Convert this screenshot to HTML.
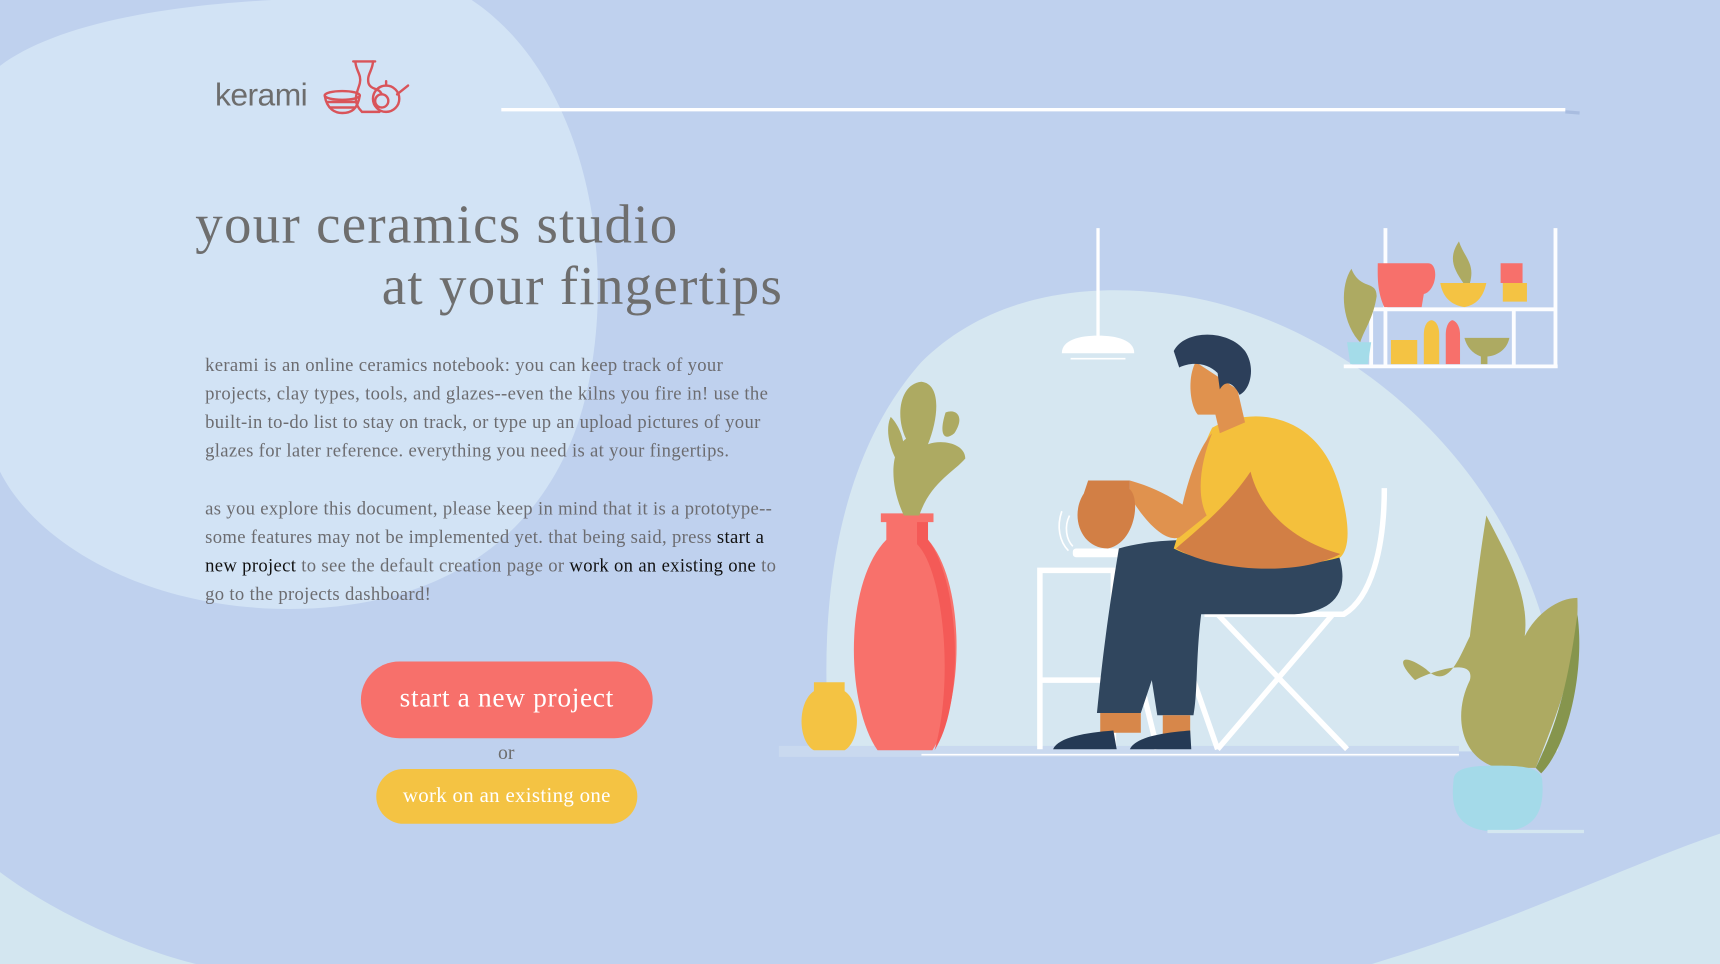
<!DOCTYPE html>
<html><head><meta charset="utf-8"><style>
html,body{margin:0;padding:0;width:1720px;height:964px;overflow:hidden;background:#bfd1ee}
#s{position:absolute;left:0;top:0;width:1568px;height:879px;transform:scale(1.09694);transform-origin:0 0}
svg{position:absolute;left:0;top:0}
.t{position:absolute;font-family:"Liberation Serif",serif;color:#6e6e6e;white-space:nowrap}
.p{font-size:17px;line-height:26px;color:#6c6c70;left:187px;letter-spacing:0.3px}
.p b{font-weight:normal;color:#111}
.btn{position:absolute;border-radius:40px;color:#fff;font-family:"Liberation Serif",serif;text-align:center}
</style></head><body><div id="s">
<svg width="1568" height="879" viewBox="0 0 1568 879">
<rect width="1568" height="879" fill="#bfd1ee"/>
<path d="M0 60 C60 15 200 -10 430 0 C520 60 560 200 540 330 C520 470 420 560 250 555 C120 550 30 490 0 430 Z" fill="#d2e3f5"/>
<path d="M0 795 C60 840 140 870 180 879 L0 879 Z" fill="#d3e6f0"/>
<path d="M1250 879 C1380 840 1480 790 1568 760 L1568 879 Z" fill="#d3e6f0"/>
<path d="M757 685 C745 560 760 420 840 330 C900 270 990 255 1080 270 C1200 290 1330 380 1390 520 C1420 590 1425 650 1420 685 Z" fill="#d6e7f1"/>
<line x1="457" y1="100" x2="1427" y2="100" stroke="#fff" stroke-width="3"/>
<line x1="1427" y1="102" x2="1440" y2="103" stroke="#a9bde0" stroke-width="3"/>
<g fill="none" stroke="#d9545a" stroke-width="2.2" stroke-linecap="round">
<ellipse cx="312" cy="87" rx="16" ry="4"/>
<path d="M296 87 C298 100 306 103 312 103 C320 103 326 100 328 87"/>
<path d="M299 93 H326 M301 98 H323"/>
<path d="M322 56 H342 M324 56 C324 64 330 68 328 76 C326 84 320 92 330 102 H346"/>
<path d="M340 56 C340 64 334 68 336 76 C338 82 346 80 348 86"/>
<circle cx="352" cy="90" r="12"/><circle cx="348" cy="92" r="6"/>
<path d="M352 78 v-4 M362 86 L372 78"/>
</g>
<line x1="1001" y1="208" x2="1001" y2="308" stroke="#fff" stroke-width="3"/>
<path d="M968 322 C968 310 984 306 1001 306 C1018 306 1034 310 1034 322 Z" fill="#fff"/>
<line x1="976" y1="327" x2="1026" y2="327" stroke="#fff" stroke-width="1.5"/>
<path d="M710 680 H1330 V690 H710 Z" fill="#c9d9ef"/>
<line x1="840" y1="688" x2="1330" y2="688" stroke="#fff" stroke-width="1.5"/>
<path d="M742 622 H770 V630 C785 640 785 675 770 684 H742 C727 675 727 640 742 630 Z" fill="#f4c343"/>
<path d="M803 468 H851 V476 H846 V492 C880 530 880 640 850 684 H800 C770 640 770 530 808 492 V476 H803 Z" fill="#f8716b"/>
<path d="M836 476 H846 V492 C875 530 880 640 852 684 C870 620 860 520 836 496 Z" fill="#f45a57"/>
<path d="M824 470 C810 440 812 410 826 400 C816 380 820 350 840 348 C858 350 856 380 846 405 C860 400 880 405 880 418 C870 430 848 440 838 470 Z" fill="#adaa62"/>
<path d="M812 380 C805 395 815 420 822 425 C828 410 822 390 812 380 Z M862 376 C872 372 880 380 870 395 C862 402 855 398 862 376 Z" fill="#adaa62"/>
<g stroke="#fff" stroke-width="5" fill="none">
<path d="M948 683 V520 H1015 V683 M948 620 H1030 M1015 520 L1055 683"/>
</g>
<rect x="978" y="500" width="52" height="8" rx="3" fill="#fff"/>
<g stroke="#fff" stroke-width="5" fill="none">
<path d="M1262 445 C1262 500 1250 545 1225 560 L1098 560"/>
<path d="M1110 560 L1228 683 M1215 560 L1110 683 M1060 540 L1110 683"/>
</g>
<path d="M1020 500 C1060 488 1130 490 1220 505 C1232 540 1215 558 1180 560 L1095 560 C1090 600 1092 630 1088 652 H1055 L1050 620 L1040 650 H1000 C1005 600 1010 560 1020 500 Z" fill="#30465e"/>
<path d="M1003 650 H1040 L1040 668 H1003 Z M1060 652 H1085 V670 H1060 Z" fill="#d7874a"/>
<path d="M960 683 C965 672 990 668 1015 666 L1018 683 Z M1030 683 C1035 672 1060 668 1085 666 L1086 683 Z" fill="#253a55"/>
<path d="M1105 390 C1140 370 1200 375 1220 440 C1232 480 1230 500 1222 508 C1180 520 1110 520 1070 500 C1080 470 1090 420 1105 390 Z" fill="#f4c03c"/>
<path d="M1140 430 C1150 470 1185 495 1222 505 C1185 525 1110 522 1072 500 C1095 480 1120 460 1140 430 Z" fill="#d27f45"/>
<path d="M1105 395 C1095 420 1090 450 1100 470 L1075 490 C1060 495 1040 470 1030 452 L1030 438 C1055 445 1070 455 1078 460 C1085 430 1095 405 1105 395 Z" fill="#e0924e"/>
<path d="M1090 330 C1082 345 1085 370 1092 378 L1108 378 L1112 395 L1135 385 L1128 355 Z" fill="#e0924e"/>
<path d="M1070 320 C1080 300 1120 300 1135 320 C1145 335 1140 355 1130 360 C1125 350 1118 345 1112 355 L1110 340 C1100 330 1085 330 1075 335 Z" fill="#2c3f5a"/>
<path d="M992 438 H1030 V446 C1040 455 1035 495 1010 500 C985 500 975 470 988 450 Z" fill="#d27f45"/>
<path d="M975 470 C970 480 972 492 978 498 M968 466 C963 480 966 494 974 502" stroke="#fff" stroke-width="1.5" fill="none"/>
<g stroke="#fff" stroke-width="3.5" fill="none" opacity=".95">
<path d="M1263 208 V335 M1418 208 V335 M1225 334 H1420 M1250 282 H1418 M1250 282 V334 M1380 282 V334"/>
</g>
<path d="M1256 240 H1302 C1312 240 1310 265 1298 268 L1296 280 H1262 C1255 265 1256 250 1256 240 Z" fill="#f7706b"/>
<path d="M1313 258 H1355 C1352 272 1345 278 1335 280 C1322 278 1315 270 1313 258 Z" fill="#f4c343"/>
<path d="M1334 258 C1325 245 1320 235 1330 220 C1335 235 1345 240 1340 258 Z" fill="#adaa62"/>
<path d="M1368 240 H1388 V258 H1368 Z" fill="#f7706b"/><path d="M1370 258 H1392 V275 H1370 Z" fill="#f4c343"/>
<path d="M1238 310 C1222 290 1222 260 1232 245 C1240 265 1255 255 1255 270 C1252 290 1244 300 1240 312 Z" fill="#adaa62"/>
<path d="M1228 312 H1250 L1247 332 H1231 Z" fill="#a4dce9"/>
<path d="M1268 310 H1292 V332 H1268 Z" fill="#f4c343"/>
<path d="M1298 305 C1298 296 1302 292 1305 292 C1308 292 1312 296 1312 305 V332 H1298 Z" fill="#f4c343"/>
<path d="M1318 305 C1318 296 1322 292 1324 292 C1326 292 1331 296 1331 305 V332 H1318 Z" fill="#f7706b"/>
<path d="M1335 308 H1376 C1374 318 1366 324 1356 325 V332 H1350 V325 C1342 322 1337 316 1335 308 Z" fill="#adaa62"/>
<path d="M1365 700 C1330 690 1325 650 1340 620 C1345 600 1310 610 1290 620 C1270 600 1280 595 1300 610 C1320 630 1330 600 1340 580 C1345 540 1350 500 1355 470 C1370 500 1395 540 1390 580 C1400 560 1420 545 1438 545 C1440 600 1420 650 1400 700 Z" fill="#adaa62"/>
<path d="M1400 700 C1420 660 1430 620 1438 560 C1445 610 1430 680 1405 705 Z" fill="#86954d"/>
<path d="M1325 712 C1325 700 1340 698 1365 698 C1390 698 1406 700 1406 712 C1408 740 1400 758 1365 758 C1330 758 1322 740 1325 712 Z" fill="#a4dae9"/>
<path d="M1356 758 H1444" stroke="#d4e7f0" stroke-width="3"/>
</svg>
<div class="t" style="left:196px;top:71px;font-family:'Liberation Sans',sans-serif;font-size:29px;color:#6d6d6d;letter-spacing:-0.5px">kerami</div>
<div class="t" style="left:178px;top:174px;font-size:50px;line-height:60px;letter-spacing:1.2px">your ceramics studio</div>
<div class="t" style="left:348px;top:230px;font-size:50px;line-height:60px;letter-spacing:1.2px">at your fingertips</div>
<div class="t p" style="top:320px">kerami is an online ceramics notebook: you can keep track of your<br>projects, clay types, tools, and glazes--even the kilns you fire in! use the<br>built-in to-do list to stay on track, or type up an upload pictures of your<br>glazes for later reference. everything you need is at your fingertips.</div>
<div class="t p" style="top:451px">as you explore this document, please keep in mind that it is a prototype--<br>some features may not be implemented yet. that being said, press <b>start a</b><br><b>new project</b> to see the default creation page or <b>work on an existing one</b> to<br>go to the projects dashboard!</div>
<div class="btn" style="left:329px;top:603px;width:266px;height:70px;line-height:68px;background:#f7706b;font-size:25px;letter-spacing:0.6px">start a new project</div>
<div class="t" style="left:454px;top:676px;font-size:18px">or</div>
<div class="btn" style="left:343px;top:701px;width:238px;height:50px;line-height:50px;background:#f4c343;font-size:19px;letter-spacing:0.3px">work on an existing one</div>
</div></body></html>
